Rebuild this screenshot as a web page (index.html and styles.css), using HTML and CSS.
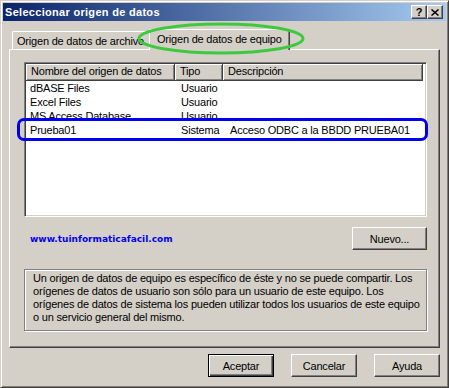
FILE: index.html
```html
<!DOCTYPE html>
<html lang="es">
<head>
    <meta charset="UTF-8">
    <title>Seleccionar origen de datos</title>
    <link rel="stylesheet" href="styles.css">
</head>
<body>

    <div class="window">
        <!-- Title bar -->
        <div class="titlebar">
            <span class="title">Seleccionar origen de datos</span>
            <div class="caption-buttons">
                <button class="caption-btn">?</button>
                <button class="caption-btn">
                    <svg width="8" height="7" viewBox="0 0 8 7">
                        <path d="M0.5 0.5 L7.5 6.5 M7.5 0.5 L0.5 6.5" stroke="#000" stroke-width="1.5" fill="none"/>
                    </svg>
                </button>
            </div>
        </div>

        <div class="content">
            <!-- Tabs -->
            <div class="tabs">
                <div class="tab">Origen de datos de archivo</div>
                <div class="tab active">Origen de datos de equipo</div>
            </div>

            <div class="panel">
                <div class="listbox">
                    <div class="list-header">
                        <div class="col-head">Nombre del origen de datos</div>
                        <div class="col-head">Tipo</div>
                        <div class="col-head">Descripción</div>
                    </div>
                    <div class="list-row">
                        <div class="cell first">dBASE Files</div>
                        <div class="cell">Usuario</div>
                        <div class="cell desc"></div>
                    </div>
                    <div class="list-row">
                        <div class="cell first">Excel Files</div>
                        <div class="cell">Usuario</div>
                        <div class="cell desc"></div>
                    </div>
                    <div class="list-row">
                        <div class="cell first">MS Access Database</div>
                        <div class="cell">Usuario</div>
                        <div class="cell desc"></div>
                    </div>
                    <div class="list-row">
                        <div class="cell first">Prueba01</div>
                        <div class="cell">Sistema</div>
                        <div class="cell desc">Acceso ODBC a la BBDD PRUEBA01</div>
                    </div>
                </div>

                <div class="link-row">
                    <span class="site-link">www.tuinformaticafacil.com</span>
                    <button class="btn btn-new">Nuevo...</button>
                </div>

                <div class="info-box">
                    Un origen de datos de equipo es específico de éste y no se puede compartir. Los<br>
                    orígenes de datos de usuario son sólo para un usuario de este equipo. Los<br>
                    orígenes de datos de sistema los pueden utilizar todos los usuarios de este equipo<br>
                    o un servicio general del mismo.
                </div>
            </div>

            <!-- Dialog buttons -->
            <div class="footer">
                <button class="btn default">Aceptar</button>
                <button class="btn">Cancelar</button>
                <button class="btn">Ayuda</button>
            </div>
        </div>

        <!-- Annotations drawn over the screenshot -->
        <svg class="mark-tab" width="168" height="33" viewBox="0 0 168 33">
            <ellipse cx="84" cy="16.5" rx="82" ry="14.5" stroke="#3ec83e" stroke-width="3" fill="none"/>
        </svg>
        <div class="mark-row"></div>
    </div>

</body>
</html>
```

FILE: styles.css
```css
/* Classic Windows dialog look */
* {
    box-sizing: border-box;
}

body {
    margin: 0;
    background-color: #d4d0c8;
    font-family: "Liberation Sans", Arial, sans-serif;
    font-size: 11px;
    letter-spacing: -0.2px;
    color: #000;
}

.window {
    position: relative;
    width: 449px;
    height: 388px;
    padding: 2px;
    background-color: #d4d0c8;
    border: 1px solid;
    border-color: #d4d0c8 #404040 #404040 #d4d0c8;
    box-shadow: inset 1px 1px #fff, inset -1px -1px #808080;
}

/* Title bar */
.titlebar {
    height: 18px;
    display: flex;
    align-items: center;
    justify-content: space-between;
    padding: 0 3px 0 2px;
    background: linear-gradient(to right, #0a246a, #a6caf0);
}

.title {
    color: #fff;
    font-weight: bold;
    font-size: 11px;
    letter-spacing: 0.3px;
}

.caption-buttons {
    display: flex;
}

.caption-btn {
    width: 16px;
    height: 14px;
    padding: 0;
    display: flex;
    align-items: center;
    justify-content: center;
    background-color: #d4d0c8;
    border: 1px solid;
    border-color: #fff #404040 #404040 #fff;
    box-shadow: inset -1px -1px #808080;
    font-family: "Liberation Sans", Arial, sans-serif;
    font-weight: bold;
    font-size: 11px;
    line-height: 12px;
    color: #000;
}

.content {
    padding: 8px 6px 0 6px;
}

/* Tabs */
.tabs {
    display: flex;
    align-items: flex-end;
    height: 21px;
    padding-left: 3px;
}

.tab {
    width: 139px;
    height: 18px;
    margin-bottom: 1px;
    padding: 1px 0 0 4px;
    display: flex;
    align-items: center;
    white-space: nowrap;
    overflow: hidden;
    background-color: #d4d0c8;
    border: 1px solid;
    border-bottom: none;
    border-color: #fff #404040 #404040 #fff;
    border-radius: 2px 2px 0 0;
    box-shadow: inset -1px 0 #808080;
}

.tab.active {
    width: 141px;
    height: 21px;
    margin-bottom: 0;
    margin-left: -2px;
    padding: 0 0 2px 7px;
    position: relative;
    z-index: 1;
}

/* Tab page */
.panel {
    height: 299px;
    margin-top: -1px;
    padding: 12px 12px 0 14px;
    border: 1px solid;
    border-color: #fff #404040 #404040 #fff;
    box-shadow: inset -1px -1px #808080;
}

/* List view */
.listbox {
    height: 155px;
    background-color: #fff;
    border: 1px solid;
    border-color: #808080 #fff #fff #808080;
    box-shadow: inset 1px 1px #404040, inset -1px -1px #d4d0c8;
    padding: 1px;
}

.list-header,
.list-row {
    display: grid;
    grid-template-columns: 149px 48px 200px;
}

.list-header {
    height: 17px;
}

.col-head {
    padding-left: 5px;
    line-height: 15px;
    background-color: #d4d0c8;
    border-right: 1px solid #404040;
    border-bottom: 1px solid #404040;
    box-shadow: inset 1px 1px #fff, inset -1px -1px #808080;
    white-space: nowrap;
}

.list-row {
    height: 14px;
    line-height: 14px;
}

.cell {
    padding-left: 6px;
    white-space: nowrap;
}

.cell.first {
    padding-left: 4px;
}

.cell.desc {
    padding-left: 7px;
}

/* Link and Nuevo button */
.link-row {
    display: flex;
    align-items: center;
    justify-content: space-between;
    height: 23px;
    margin-top: 10px;
}

.site-link {
    margin-left: 6px;
    font-family: "DejaVu Sans", Verdana, sans-serif;
    font-weight: bold;
    font-size: 9px;
    letter-spacing: 0;
    color: #0000f0;
}

.btn {
    width: 66px;
    height: 23px;
    padding: 0;
    background-color: #d4d0c8;
    border: 1px solid;
    border-color: #fff #404040 #404040 #fff;
    box-shadow: inset -1px -1px #808080;
    font-family: "Liberation Sans", Arial, sans-serif;
    font-size: 11px;
    letter-spacing: -0.2px;
    color: #000;
}

.btn-new {
    width: 75px;
}

.btn.default {
    border-color: #000;
    box-shadow: inset 1px 1px #fff, inset -1px -1px #404040, inset -2px -2px #808080;
}

/* Explanation box */
.info-box {
    height: 62px;
    margin-top: 19px;
    padding: 2px 8px;
    line-height: 13px;
    white-space: nowrap;
    border: 1px solid #808080;
    box-shadow: inset 1px 1px #fff, 1px 1px #fff;
}

/* Dialog buttons */
.footer {
    display: flex;
    justify-content: flex-end;
    gap: 17px;
    margin-top: 6px;
}

/* Annotations */
.mark-tab {
    position: absolute;
    left: 136px;
    top: 21px;
    z-index: 2;
}

.mark-row {
    position: absolute;
    left: 16px;
    top: 117px;
    width: 411px;
    height: 23px;
    border: 3px solid #0000ee;
    border-radius: 7px;
    z-index: 2;
}
```
